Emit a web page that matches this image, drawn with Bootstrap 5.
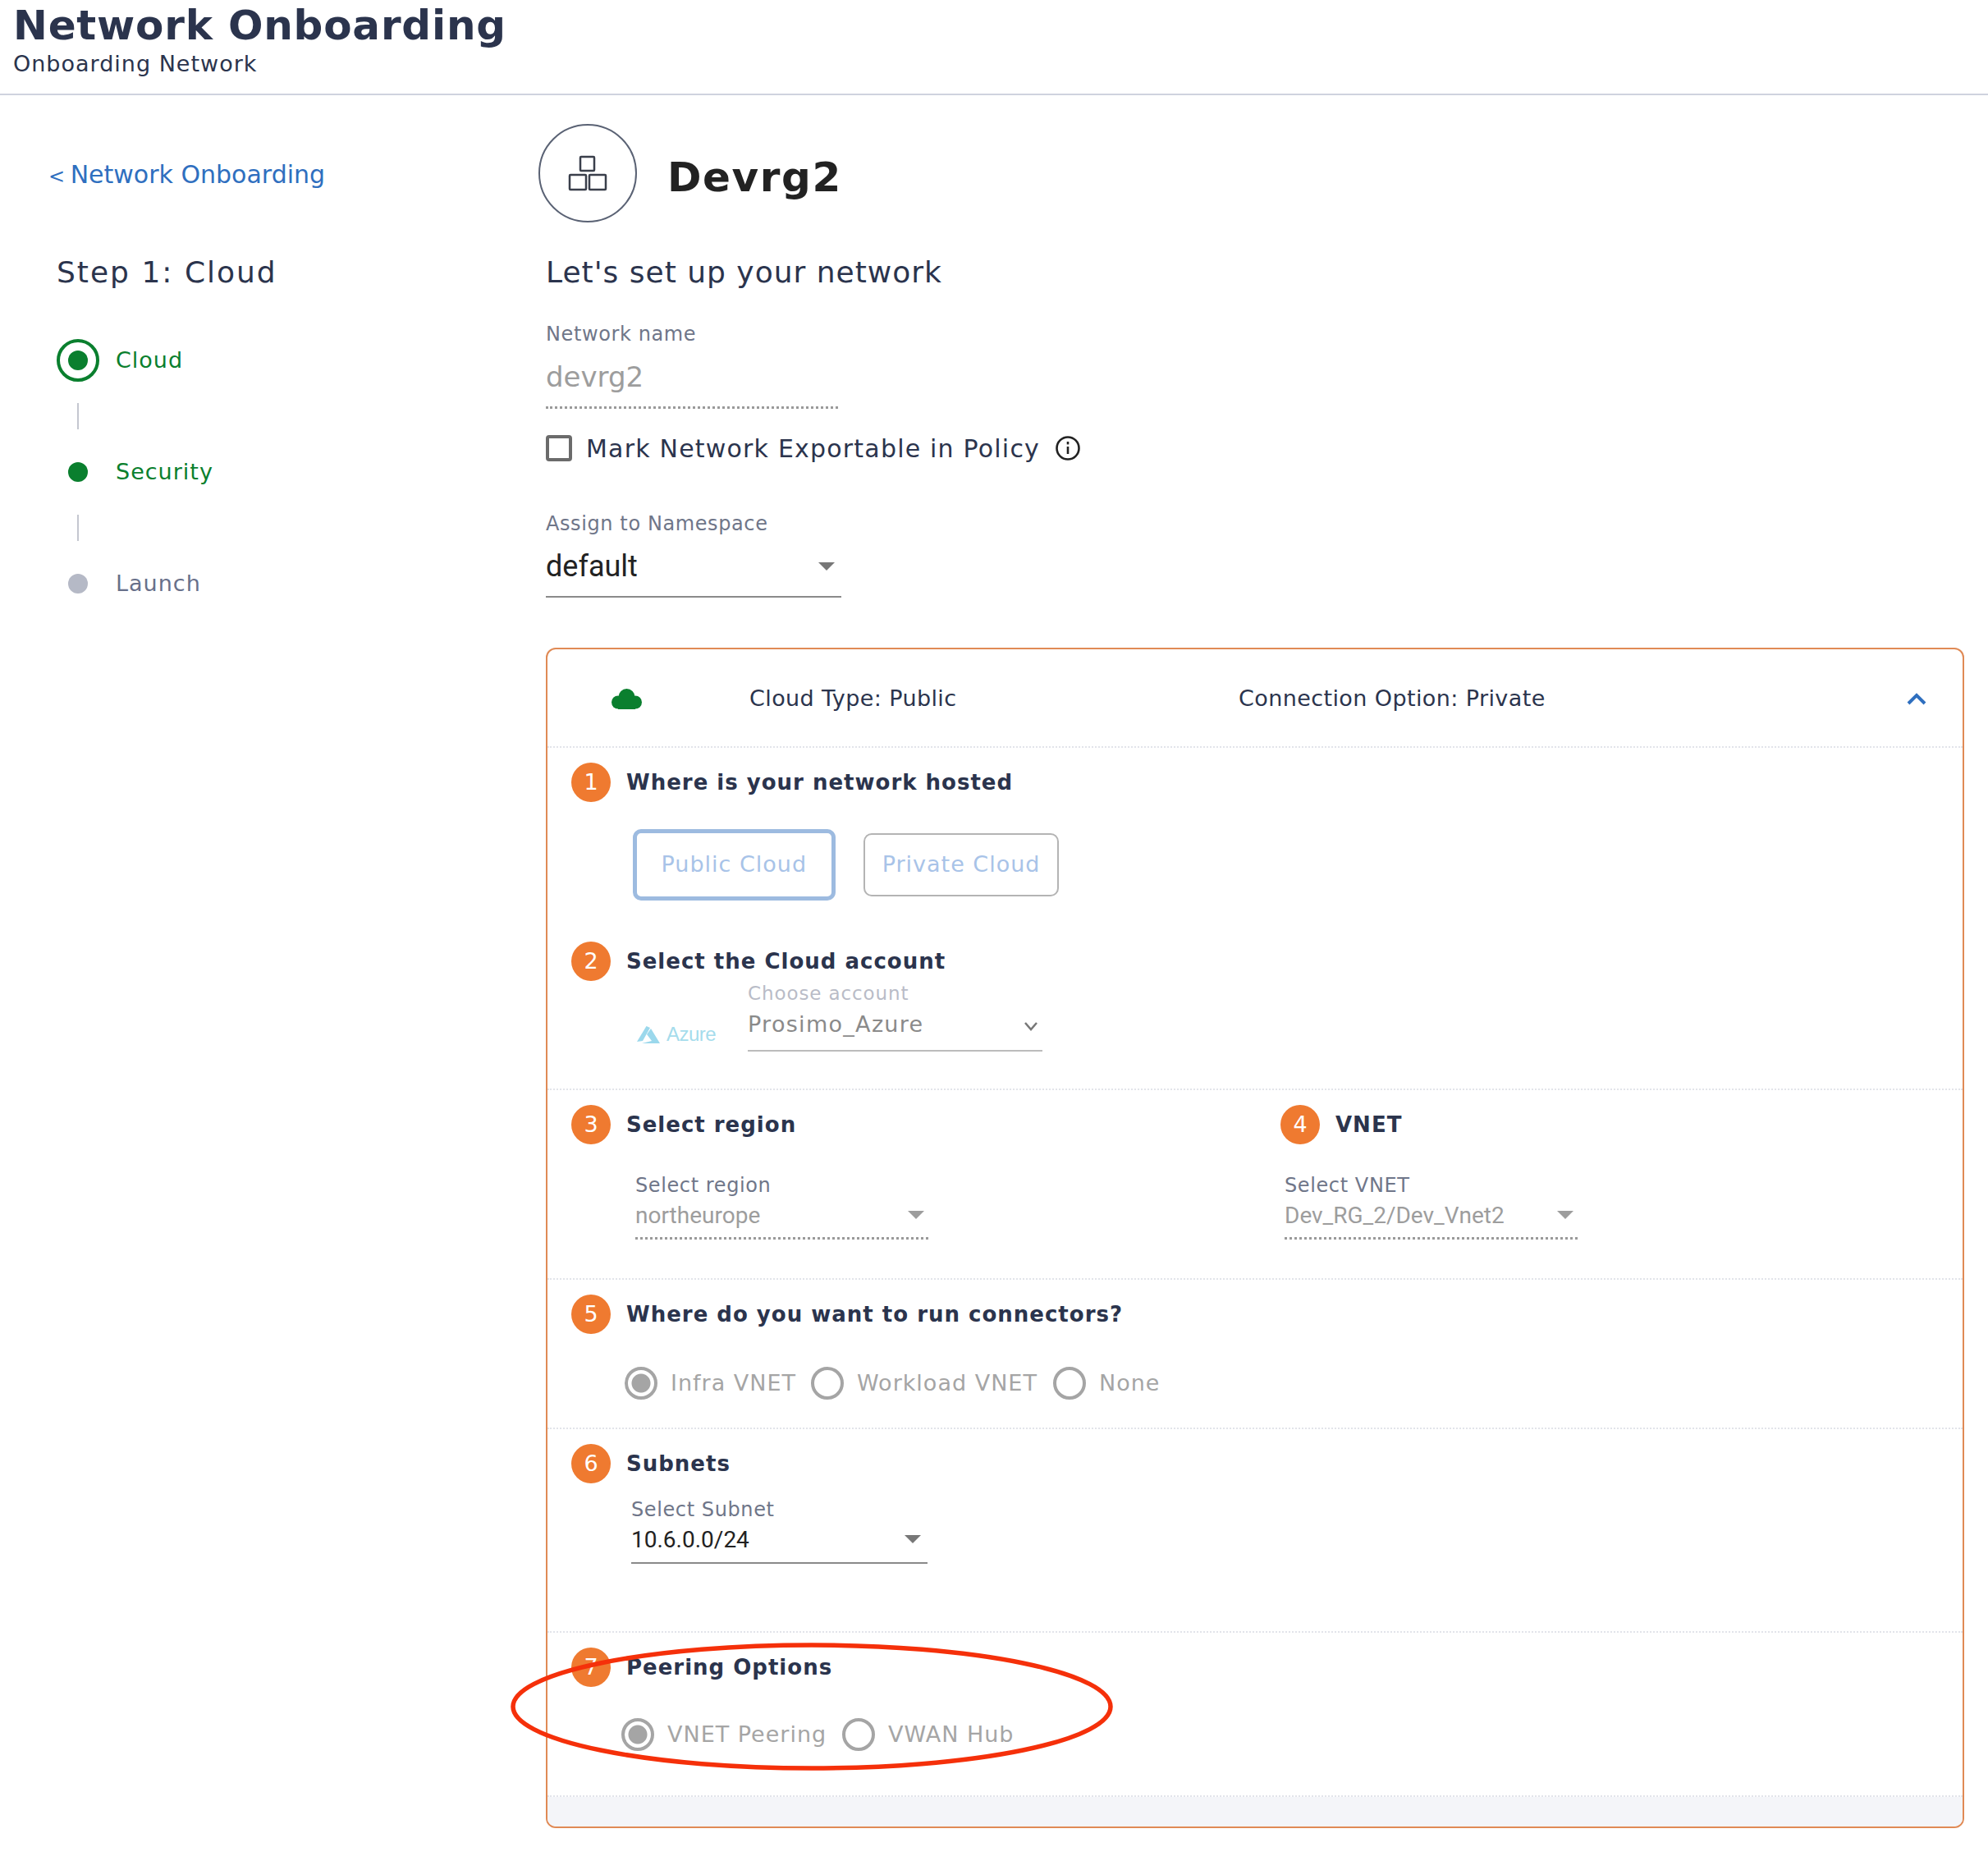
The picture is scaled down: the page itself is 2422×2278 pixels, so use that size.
<!DOCTYPE html>
<html lang="en">

<head>
  <meta charset="UTF-8" />
  <title>Network Onboarding</title>
  <link href="https://cdn.jsdelivr.net/npm/bootstrap@5.3.3/dist/css/bootstrap.min.css" rel="stylesheet" />
  <style>
    body {
      font-family: "DejaVu Sans", sans-serif;
      color: #2b344d;
      background: #fff;
      position: relative;
      min-height: 2278px;
    }

    .page-head {
      height: 116px;
      padding: 4px 16px 0;
      border-bottom: 2px solid #cfd3de;
    }

    .page-head h1 {
      font-size: 50px;
      font-weight: 700;
      line-height: 54px;
      letter-spacing: .8px;
      margin: 0;
    }

    .page-head p {
      font-size: 27px;
      line-height: 32px;
      letter-spacing: 1px;
      margin: 4px 0 0;
    }

    .side-col {
      width: 665px;
      flex: none;
      padding-left: 59px;
    }

    .back-link {
      display: block;
      margin-top: 77px;
      height: 44px;
      font-size: 30px;
      line-height: 40px;
      color: #2f6fbf;
      text-decoration: none;
    }

    .back-link span {
      font-size: 24px;
      margin-right: -3px;
    }

    .step-title {
      margin: 73px 0 0 10px;
      font-size: 36px;
      line-height: 44px;
      letter-spacing: 2px;
      font-weight: 400;
    }

    .stepper {
      margin: 59px 0 0 10px;
      list-style: none;
      padding: 0;
    }

    .stepper li {
      height: 52px;
      font-size: 27px;
      letter-spacing: 1px;
      color: #0a7f2e;
    }

    .stepper li.todo {
      color: #68708a;
    }

    .step-dot {
      width: 52px;
      height: 52px;
      flex: none;
      margin-right: 20px;
      border-radius: 50%;
    }

    .step-dot::after {
      content: "";
      width: 24px;
      height: 24px;
      border-radius: 50%;
      background: #0a7f2e;
    }

    .step-dot.current {
      border: 4px solid #0a7f2e;
    }

    .todo .step-dot::after {
      background: #b5b9c6;
    }

    .stepper li.step-link {
      width: 2px;
      height: 32px;
      margin: 26px 0 26px 25px;
      background: #c4c7d0;
    }

    .main-col {
      width: 1728px;
      flex: none;
    }

    .net-head {
      margin: 35px 0 0 -9px;
      height: 120px;
    }

    .net-icon {
      width: 120px;
      height: 120px;
      border: 2px solid #5a6274;
      border-radius: 50%;
      color: #3a3f4b;
    }

    .net-name {
      margin: 10px 0 0 37px;
      font-size: 50px;
      font-weight: 700;
      letter-spacing: 1.600px;
      color: #222;
    }

    .set-up {
      margin: 39px 0 0;
      font-size: 36px;
      line-height: 44px;
      letter-spacing: 1px;
      font-weight: 400;
    }

    .fld-label {
      font-size: 24px;
      line-height: 30px;
      letter-spacing: .6px;
      color: #6f7689;
      display: block;
      margin: 0;
    }

    .fld-label.name-label {
      margin-top: 38px;
    }

    .fld-box {
      position: relative;
      font-family: Roboto, sans-serif;
      border-bottom: 2px solid #8a8a8a;
      color: #222;
    }

    .fld-box.is-dotted {
      border-bottom: 3px dotted #9a9a9a;
      color: #9d9d9d;
    }

    .fld-box::after {
      content: "";
      position: absolute;
      right: 8px;
      top: 16px;
      border: 10px solid transparent;
      border-bottom: 0;
      border-top: 10px solid #777;
    }

    .fld-box.is-dotted::after {
      right: 5px;
      border-top-color: #9d9d9d;
    }

    .fld-box.no-caret::after {
      display: none;
    }

    .name-box {
      width: 356px;
      height: 65px;
      margin-top: 11px;
      font-size: 34px;
      line-height: 52px;
      font-family: "DejaVu Sans", sans-serif;
      color: #a5a5a5;
    }

    .export-row {
      margin-top: 32px;
      height: 32px;
      font-size: 30px;
      letter-spacing: 1.2px;
      color: #2b344d;
    }

    .export-row input {
      width: 32px;
      height: 32px;
      margin: 0 17px 0 0;
      border: 4px solid #6b6b6b;
      border-radius: 4px;
      appearance: none;
      flex: none;
    }

    .info-icon {
      margin-left: 18px;
    }

    .fld-label.ns-label {
      margin-top: 61px;
    }

    .ns-box {
      width: 360px;
      height: 65px;
      margin-top: 10px;
      font-size: 36px;
      line-height: 54px;
    }

    .ns-box::after {
      top: 22px;
    }

    .cloud-card {
      margin-top: 61px;
      width: 1728px;
      height: 1438px;
      border: 2px solid #e08a55;
      border-radius: 12px;
      overflow: hidden;
    }

    .card-top {
      height: 120px;
      flex: none;
      font-size: 27px;
      letter-spacing: .4px;
      border-bottom: 2px dotted #e2e4ea;
      position: relative;
    }

    .card-top span {
      position: absolute;
      top: 42px;
      line-height: 36px;
    }

    .card-top svg {
      position: absolute;
    }

    .sect {
      padding: 18px 0 0 29px;
      border-bottom: 2px dotted #e2e4ea;
      flex: none;
    }

    .sect:last-of-type {
      border-bottom: 0;
    }

    .num {
      width: 48px;
      height: 48px;
      flex: none;
      border-radius: 50%;
      background: #ef7a30;
      color: #fff;
      font-size: 27px;
      margin-right: 19px;
    }

    .sect-title {
      font-size: 26px;
      font-weight: 700;
      letter-spacing: 1px;
    }

    .cloud-btn-row {
      height: 87px;
      margin: 33px 0 0 75px;
      gap: 34px;
    }

    .cloud-btn {
      height: 77px;
      padding: 0 21px;
      font-size: 27px;
      letter-spacing: 1px;
      color: #a8c3e8;
      background: #fff;
      border: 2px solid #b4b4b4;
      border-radius: 10px;
    }

    .cloud-btn.picked {
      height: 87px;
      padding: 0 29.500px;
      border: 5px solid #9dbbe0;
    }

    .acct-row {
      padding: 0 0 45px 80px;
    }

    .azure-mark {
      width: 135px;
      height: 30px;
      margin-bottom: 6px;
    }

    .acct-label {
      font-size: 23px;
      line-height: 30px;
      letter-spacing: .9px;
      color: #b9bcc7;
    }

    .acct-box {
      width: 359px;
      height: 56px;
      border-bottom: 2px solid #bcbcbc;
      font-size: 27px;
      line-height: 46px;
      letter-spacing: 1.3px;
      color: #8a8a8a;
      position: relative;
    }

    .acct-box svg {
      position: absolute;
      right: 4px;
      top: 18px;
    }

    .azure-word {
      font-family: "Liberation Sans", sans-serif;
      font-size: 24px;
      color: #a5dcec;
      letter-spacing: -.5px;
      margin-left: 8px;
    }

    .pick-box {
      width: 357px;
      height: 51px;
      font-size: 28px;
      line-height: 44px;
    }

    .radio-item {
      color: #a5a5a5;
      font-size: 27px;
      letter-spacing: 1px;
      height: 40px;
    }

    .radio-item input {
      appearance: none;
      width: 40px;
      height: 40px;
      flex: none;
      margin: 0 16px 0 0;
      border: 4px solid #a5a5a5;
      border-radius: 50%;
      background: #fff;
    }

    .radio-item input:checked {
      background: radial-gradient(circle, #a5a5a5 0 11px, #fff 12px);
    }

    .card-foot {
      height: 36px;
      flex: none;
      background: #f4f5f9;
    }

    .ring {
      position: absolute;
      left: 620px;
      top: 1998px;
      pointer-events: none;
    }
  </style>
</head>

<body>

  <header class="page-head">
    <h1>Network Onboarding</h1>
    <p>Onboarding Network</p>
  </header>

  <div class="d-flex">
    <aside class="side-col">
      <a class="back-link" href="#"><span>&lt;</span> Network Onboarding</a>
      <h2 class="step-title">Step 1: Cloud</h2>
      <ul class="stepper">
        <li class="d-flex align-items-center"><span class="step-dot current d-flex align-items-center justify-content-center"></span>Cloud</li>
        <li class="step-link"></li>
        <li class="d-flex align-items-center"><span class="step-dot d-flex align-items-center justify-content-center"></span>Security</li>
        <li class="step-link"></li>
        <li class="todo d-flex align-items-center"><span class="step-dot d-flex align-items-center justify-content-center"></span>Launch</li>
      </ul>
    </aside>

    <main class="main-col">
      <!-- circle sits a little left of the form edge -->
      <div class="net-head d-flex align-items-center">
        <div class="net-icon d-flex align-items-center justify-content-center">
          <svg width="48" height="44" viewBox="0 0 48 44" fill="none" stroke="currentColor" stroke-width="2.5">
            <rect x="15" y="2" width="17" height="17" rx="1" />
            <rect x="2" y="24" width="20" height="18" rx="1" />
            <rect x="26" y="24" width="20" height="18" rx="1" />
          </svg>
        </div>
        <div class="net-name">Devrg2</div>
      </div>

      <h2 class="set-up">Let's set up your network</h2>

      <label class="fld-label name-label">Network name</label>
      <div class="fld-box is-dotted no-caret name-box">devrg2</div>

      <div class="export-row d-flex align-items-center">
        <input type="checkbox" />
        <span>Mark Network Exportable in Policy</span>
        <svg class="info-icon" width="32" height="32" viewBox="0 0 32 32" fill="none" stroke="#222" stroke-width="2.6">
          <circle cx="16" cy="16" r="13.5" />
          <path d="M16 14v9" />
          <path d="M16 8v3.4" />
        </svg>
      </div>

      <label class="fld-label ns-label">Assign to Namespace</label>
      <div class="fld-box ns-box">default</div>

      <div class="cloud-card d-flex flex-column">
        <div class="card-top">
          <svg style="left:78px;top:48px" width="37" height="25" viewBox="0 0 37 25" fill="#0a7f2e">
            <circle cx="18.500" cy="10" r="10" />
            <circle cx="8" cy="16.500" r="8" />
            <circle cx="29" cy="16.500" r="8" />
            <rect x="8" y="14" width="21" height="11" />
          </svg>
          <span style="left:246px">Cloud Type: Public</span>
          <span style="left:842px">Connection Option: Private</span>
          <svg style="left:1656px;top:53px" width="24" height="15" viewBox="0 0 24 15" fill="none" stroke="#2f6fbf" stroke-width="4">
            <path d="M2 13L12 3L22 13" />
          </svg>
        </div>

        <div class="sect">
          <div class="d-flex align-items-center">
            <span class="num d-flex align-items-center justify-content-center">1</span>
            <span class="sect-title">Where is your network hosted</span>
          </div>
          <div class="cloud-btn-row d-flex align-items-center">
            <button class="cloud-btn picked" type="button">Public Cloud</button>
            <button class="cloud-btn" type="button">Private Cloud</button>
          </div>
          <div class="d-flex align-items-center" style="margin-top:50px">
            <span class="num d-flex align-items-center justify-content-center">2</span>
            <span class="sect-title">Select the Cloud account</span>
          </div>
          <div class="acct-row d-flex align-items-end">
            <div class="azure-mark d-flex align-items-center">
              <svg width="28" height="21" viewBox="0 0 28 21" fill="#9bd8ec">
                <path d="M11.500 0L0 19L7 18L16 2Z" />
                <path d="M17 3L28 21H6L18 18L12 10Z" />
              </svg>
              <span class="azure-word">Azure</span>
            </div>
            <div>
              <div class="acct-label">Choose account</div>
              <div class="acct-box">Prosimo_Azure
                <svg width="20" height="14" viewBox="0 0 20 14" fill="none" stroke="#777" stroke-width="2.500">
                  <path d="M3 3L10 11L17 3" />
                </svg>
              </div>
            </div>
          </div>
        </div>

        <div class="sect d-flex" style="height:231px">
          <div style="width:864px">
            <div class="d-flex align-items-center">
              <span class="num d-flex align-items-center justify-content-center">3</span>
              <span class="sect-title">Select region</span>
            </div>
            <div style="margin:35px 0 0 78px">
              <label class="fld-label">Select region</label>
              <div class="fld-box is-dotted pick-box">northeurope</div>
            </div>
          </div>
          <div>
            <div class="d-flex align-items-center">
              <span class="num d-flex align-items-center justify-content-center">4</span>
              <span class="sect-title">VNET</span>
            </div>
            <div style="margin:35px 0 0 5px">
              <label class="fld-label">Select VNET</label>
              <div class="fld-box is-dotted pick-box">Dev_RG_2/Dev_Vnet2</div>
            </div>
          </div>
        </div>

        <div class="sect" style="height:182px">
          <div class="d-flex align-items-center">
            <span class="num d-flex align-items-center justify-content-center">5</span>
            <span class="sect-title">Where do you want to run connectors?</span>
          </div>
          <div class="d-flex" style="margin:40px 0 0 65px">
            <label class="radio-item d-flex align-items-center" style="width:227px"><input type="radio" name="conn" checked />Infra VNET</label>
            <label class="radio-item d-flex align-items-center" style="width:295px"><input type="radio" name="conn" />Workload VNET</label>
            <label class="radio-item d-flex align-items-center"><input type="radio" name="conn" />None</label>
          </div>
        </div>

        <div class="sect" style="height:248px">
          <div class="d-flex align-items-center">
            <span class="num d-flex align-items-center justify-content-center">6</span>
            <span class="sect-title">Subnets</span>
          </div>
          <div style="margin:17px 0 0 73px">
            <label class="fld-label">Select Subnet</label>
            <div class="fld-box pick-box" style="width:361px;height:51px">10.6.0.0/24</div>
          </div>
        </div>

        <div class="sect flex-grow-1">
          <div class="d-flex align-items-center">
            <span class="num d-flex align-items-center justify-content-center">7</span>
            <span class="sect-title">Peering Options</span>
          </div>
          <div class="d-flex" style="margin:38px 0 0 61px">
            <label class="radio-item d-flex align-items-center" style="width:269px"><input type="radio" name="peer" checked />VNET Peering</label>
            <label class="radio-item d-flex align-items-center"><input type="radio" name="peer" />VWAN Hub</label>
          </div>
        </div>

        <div class="card-foot"></div>
      </div>
    </main>
  </div>

  <!-- hand-drawn highlight over step 7 -->
  <svg class="ring" width="740" height="160" viewBox="0 0 740 160" fill="none">
    <ellipse cx="369" cy="81" rx="364" ry="75" stroke="#f5300a" stroke-width="5.5" />
  </svg>

</body>

</html>
